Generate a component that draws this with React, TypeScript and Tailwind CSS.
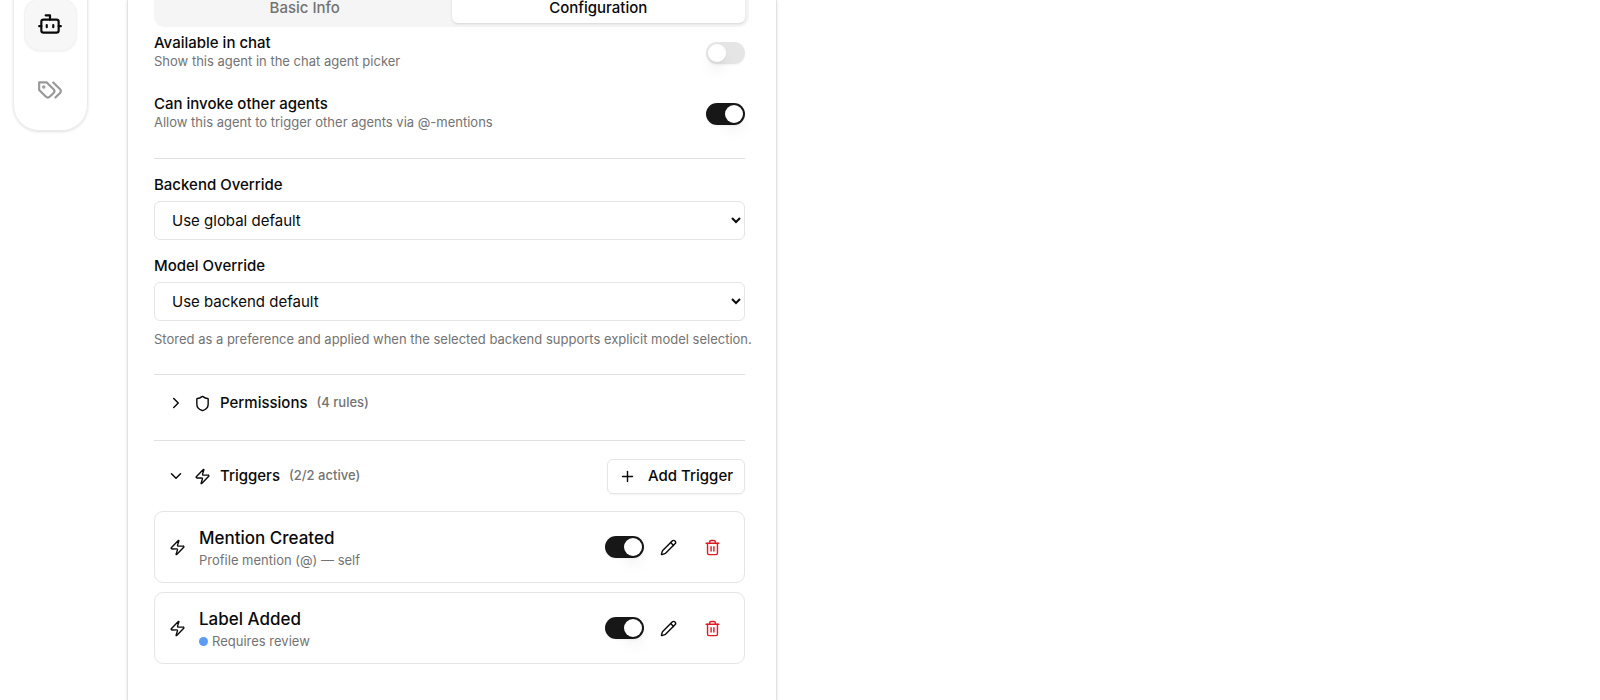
import { useState } from "react";
import { Bot, ChevronDown, ChevronRight, Pencil, Plus, Shield, Trash2, Zap } from "lucide-react";
import clsx from "clsx";

function TagsIcon() {
  return (
    <svg
      viewBox="0 0 24 24"
      fill="none"
      stroke="currentColor"
      strokeWidth="2"
      strokeLinecap="round"
      strokeLinejoin="round"
      aria-hidden="true"
      className="size-[26px]"
    >
      <path d="M9 5H2v7l6.29 6.29c.94.94 2.48.94 3.42 0l3.58-3.58c.94-.94.94-2.48 0-3.42L9 5Z" />
      <circle cx="6.2" cy="9.2" r="0.6" fill="currentColor" />
      <path d="m15 5 6.3 6.3a2.4 2.4 0 0 1 0 3.4L17 19" />
    </svg>
  );
}

function Switch({ label, defaultChecked = false }: { label: string; defaultChecked?: boolean }) {
  return (
    <label className="relative flex shrink-0 cursor-pointer">
      <input
        type="checkbox"
        role="switch"
        aria-label={label}
        defaultChecked={defaultChecked}
        className="peer h-[22px] w-[39px] cursor-pointer appearance-none rounded-full bg-[#e5e5e5] shadow-xs checked:bg-[#171717]"
      />
      <span className="pointer-events-none absolute top-0.5 left-0.5 size-[18px] rounded-full bg-white shadow-lg peer-checked:left-[19px]" />
    </label>
  );
}

function SettingRow({ title, hint, on }: { title: string; hint: string; on?: boolean }) {
  return (
    <div className="flex items-center justify-between">
      <div className="pb-[3px]">
        <p className="text-[15px] leading-5 font-medium">{title}</p>
        <p className="text-[13px] leading-4 text-[#737373]">{hint}</p>
      </div>
      <Switch label={title} defaultChecked={on} />
    </div>
  );
}

function SelectField({ id, label, option }: { id: string; label: string; option: string }) {
  return (
    <div className="flex flex-col gap-1.5">
      <label htmlFor={id} className="text-[15px] leading-5 font-medium">
        {label}
      </label>
      <select id={id} className="h-[39px] w-full rounded-md border border-[#e5e5e5] bg-white pr-2.5 pl-[13px] text-[15px]">
        <option>{option}</option>
      </select>
    </div>
  );
}

type SectionProps = {
  icon: typeof Zap;
  title: string;
  count: string;
  open: boolean;
  onToggle: () => void;
};

function SectionToggle({ icon: Icon, title, count, open, onToggle }: SectionProps) {
  const Chevron = open ? ChevronDown : ChevronRight;
  return (
    <button type="button" aria-expanded={open} onClick={onToggle} className="flex h-9 items-center gap-[9px] px-[13px]">
      <Chevron className="size-[18px]" />
      <Icon className="size-[17px]" />
      <span className="text-[15px] font-medium">{title}</span>
      <span className="text-[13px] font-medium text-[#737373]">{count}</span>
    </button>
  );
}

function TriggerCard({ title, detail, dot }: { title: string; detail: string; dot?: boolean }) {
  return (
    <li className="flex h-18 items-center rounded-[9px] border border-[#e5e5e5] pr-3.5 pl-3.5">
      <Zap className="size-[17px] shrink-0" />
      <div className="ml-[13px] min-w-0 flex-1 pt-0.5">
        <h3 className="text-[17px] leading-6 font-medium">{title}</h3>
        <p className="flex items-center gap-1 text-[13px] leading-5 text-[#737373]">
          {dot && <span className="size-[9px] rounded-full bg-[#5a9cf5]" />}
          {detail}
        </p>
      </div>
      <Switch label={`${title} enabled`} defaultChecked />
      <div className="ml-1.5 flex gap-2">
        <button type="button" aria-label={`Edit ${title}`} className="flex size-9 items-center justify-center rounded-md">
          <Pencil className="size-[17px]" />
        </button>
        <button
          type="button"
          aria-label={`Delete ${title}`}
          className="flex size-9 items-center justify-center rounded-md text-[#e01b24]"
        >
          <Trash2 className="size-[17px]" />
        </button>
      </div>
    </li>
  );
}

const tabs = ["Basic Info", "Configuration"];

export default function App() {
  const [tab, setTab] = useState("Configuration");
  const [permissionsOpen, setPermissionsOpen] = useState(false);
  const [triggersOpen, setTriggersOpen] = useState(true);

  return (
    <div className="flex h-screen items-start overflow-hidden bg-white font-['Inter','Liberation_Sans',sans-serif] text-[#0a0a0a]">
      <nav
        aria-label="Main"
        className="-mt-8 ml-[13px] flex w-[75px] shrink-0 flex-col items-center gap-[15px] rounded-[26px] border border-[#ebebeb] pt-[29px] pb-3.5 shadow-sm"
      >
        <a
          href="#agents"
          aria-label="Agents"
          className="flex size-[53px] items-center justify-center rounded-2xl border border-[#f2f2f2] bg-[#f7f7f7] pr-0.5 pb-0.5 shadow-xs"
        >
          <Bot className="size-[26px]" />
        </a>
        <a href="#labels" aria-label="Labels" className="flex size-[50px] items-center justify-center pr-0.5 pb-0.5 text-[#999]">
          <TagsIcon />
        </a>
      </nav>

      <main className="ml-[39px] min-h-screen w-full max-w-[650px] border-x border-[#e2e2e2] pr-[31px] pl-[26px] shadow-sm">
        <div role="tablist" className="-mt-4 -mr-1 flex h-[43px] rounded-[10px] bg-[#f5f5f5] p-1">
          {tabs.map((name) => (
            <button
              key={name}
              type="button"
              role="tab"
              aria-selected={tab === name}
              onClick={() => setTab(name)}
              className={clsx(
                "flex-1 rounded-md pt-1 text-[15px] leading-none font-medium",
                tab === name ? "bg-white shadow-sm" : "text-[#737373]",
              )}
            >
              {name}
            </button>
          ))}
        </div>

        <div className="flex flex-col gap-[22px] border-b border-[#e0e0e0] pt-1.5 pb-[25px]">
          <SettingRow title="Available in chat" hint="Show this agent in the chat agent picker" />
          <SettingRow title="Can invoke other agents" hint="Allow this agent to trigger other agents via @-mentions" on />
        </div>

        <div className="flex flex-col gap-4 border-b border-[#e0e0e0] pt-4 pb-[25px]">
          <SelectField id="backend" label="Backend Override" option="Use global default" />
          <SelectField id="model" label="Model Override" option="Use backend default" />
          <p className="-mt-2 text-[13px] leading-5 text-[#737373] md:-mr-6 md:whitespace-nowrap">
            Stored as a preference and applied when the selected backend supports explicit model selection.
          </p>
        </div>

        <section className="border-b border-[#e0e0e0] pt-2.5 pb-[19px]">
          <SectionToggle
            icon={Shield}
            title="Permissions"
            count="(4 rules)"
            open={permissionsOpen}
            onToggle={() => setPermissionsOpen(!permissionsOpen)}
          />
        </section>

        <section className="pt-[17px]">
          <div className="flex items-center justify-between">
            <SectionToggle
              icon={Zap}
              title="Triggers"
              count="(2/2 active)"
              open={triggersOpen}
              onToggle={() => setTriggersOpen(!triggersOpen)}
            />
            <button
              type="button"
              className="flex h-[35px] items-center gap-3 rounded-md border border-[#e5e5e5] px-[11px] text-[15px] font-medium shadow-xs"
            >
              <Plus className="size-[17px]" />
              Add Trigger
            </button>
          </div>
          {triggersOpen && (
            <ul className="mt-[17px] flex flex-col gap-[9px]">
              <TriggerCard title="Mention Created" detail="Profile mention (@) — self" />
              <TriggerCard title="Label Added" detail="Requires review" dot />
            </ul>
          )}
        </section>
      </main>
    </div>
  );
}
